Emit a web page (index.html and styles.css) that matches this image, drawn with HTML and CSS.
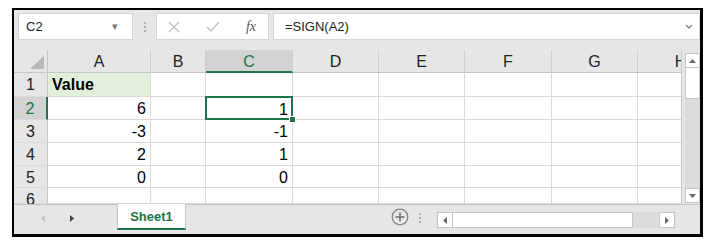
FILE: index.html
```html
<!DOCTYPE html>
<html lang="en">
  <head>
    <meta charset="UTF-8" />
    <title>SIGN function</title>
    <link rel="stylesheet" href="styles.css">
  </head>
  <body>
    <div class="window">
      <div class="formula-bar">
        <div class="name-box">
          <span>C2</span>
          <span class="caret">&#9662;</span>
        </div>
        <div class="grip"><i></i><i></i><i></i></div>
        <div class="fx-buttons">
          <svg width="12" height="12" viewBox="0 0 12 12"><path d="M1 1 L11 11 M11 1 L1 11" stroke="#bdbdbd" stroke-width="1.2" fill="none"/></svg>
          <svg width="14" height="12" viewBox="0 0 14 12"><path d="M1 6 L5 10 L13 1" stroke="#bdbdbd" stroke-width="1.2" fill="none"/></svg>
          <span class="fx">fx</span>
        </div>
        <div class="formula">
          <span>=SIGN(A2)</span>
          <svg width="8" height="5" viewBox="0 0 8 5"><path d="M1 1 L4 4 L7 1" stroke="#888" stroke-width="1.4" fill="none"/></svg>
        </div>
      </div>

      <div class="sheet">
        <div class="grid">
          <div class="hd corner"><b></b></div>
          <div class="hd col">A</div>
          <div class="hd col">B</div>
          <div class="hd col sel">C</div>
          <div class="hd col">D</div>
          <div class="hd col">E</div>
          <div class="hd col">F</div>
          <div class="hd col">G</div>
          <div class="hd col">H</div>

          <div class="hd row">1</div>
          <div class="cell label">Value</div>
          <div class="cell"></div><div class="cell"></div><div class="cell"></div><div class="cell"></div><div class="cell"></div><div class="cell"></div><div class="cell"></div>

          <div class="hd row sel">2</div>
          <div class="cell num">6</div>
          <div class="cell"></div>
          <div class="cell num active">1<i class="handle"></i></div>
          <div class="cell"></div><div class="cell"></div><div class="cell"></div><div class="cell"></div><div class="cell"></div>

          <div class="hd row">3</div>
          <div class="cell num">-3</div>
          <div class="cell"></div>
          <div class="cell num">-1</div>
          <div class="cell"></div><div class="cell"></div><div class="cell"></div><div class="cell"></div><div class="cell"></div>

          <div class="hd row">4</div>
          <div class="cell num">2</div>
          <div class="cell"></div>
          <div class="cell num">1</div>
          <div class="cell"></div><div class="cell"></div><div class="cell"></div><div class="cell"></div><div class="cell"></div>

          <div class="hd row">5</div>
          <div class="cell num">0</div>
          <div class="cell"></div>
          <div class="cell num">0</div>
          <div class="cell"></div><div class="cell"></div><div class="cell"></div><div class="cell"></div><div class="cell"></div>

          <div class="hd row">6</div>
          <div class="cell"></div><div class="cell"></div><div class="cell"></div><div class="cell"></div><div class="cell"></div><div class="cell"></div><div class="cell"></div><div class="cell"></div>
        </div>

        <div class="vscroll">
          <div class="sbtn"><svg width="7" height="4" viewBox="0 0 7 4"><path d="M0 4 L3.5 0 L7 4 Z" fill="#666"/></svg></div>
          <div class="vthumb"></div>
          <div class="vtrack"></div>
          <div class="sbtn"><svg width="7" height="4" viewBox="0 0 7 4"><path d="M0 0 L3.5 4 L7 0 Z" fill="#666"/></svg></div>
        </div>
      </div>

      <div class="tabbar">
        <div class="nav">
          <svg width="4" height="7" viewBox="0 0 4 7"><path d="M4 0 L0 3.5 L4 7 Z" fill="#c4c4c4"/></svg>
          <svg width="4" height="7" viewBox="0 0 4 7"><path d="M0 0 L4 3.5 L0 7 Z" fill="#444"/></svg>
        </div>
        <div class="tab">Sheet1</div>
        <div class="add">
          <svg width="18" height="18" viewBox="0 0 18 18"><circle cx="9" cy="9" r="7.8" stroke="#808080" stroke-width="1.3" fill="none"/><path d="M9 4.5 V13.5 M4.5 9 H13.5" stroke="#707070" stroke-width="1.6"/></svg>
        </div>
        <div class="grip"><i></i><i></i><i></i></div>
        <div class="hscroll">
          <div class="sbtn"><svg width="4" height="7" viewBox="0 0 4 7"><path d="M4 0 L0 3.5 L4 7 Z" fill="#666"/></svg></div>
          <div class="hthumb"></div>
          <div class="htrack"></div>
          <div class="sbtn"><svg width="4" height="7" viewBox="0 0 4 7"><path d="M0 0 L4 3.5 L0 7 Z" fill="#666"/></svg></div>
        </div>
      </div>
    </div>
  </body>
</html>
```

FILE: styles.css
```css
* {
  margin: 0;
  padding: 0;
  box-sizing: border-box;
}

body {
  background: #fff;
  font-family: "Liberation Sans", Arial, sans-serif;
  color: #000;
}

.window {
  margin: 8px 0 0 12px;
  width: 691px;
  height: 229px;
  border: 2px solid #000;
  border-right-width: 3px;
  border-bottom-width: 3px;
  background: #e6e6e6;
  display: flex;
  flex-direction: column;
  overflow: hidden;
}

/* formula bar */
.formula-bar {
  height: 40px;
  display: flex;
  align-items: flex-start;
  padding: 3px 0 0 4px;
}

.name-box {
  width: 115px;
  height: 27px;
  background: #fff;
  border: 1px solid #d6d6d6;
  display: flex;
  align-items: center;
  justify-content: space-between;
  padding: 0 14px 0 7px;
  font-size: 13px;
  color: #222;
}

.caret {
  font-size: 11px;
  color: #777;
}

.grip {
  width: 23px;
  height: 27px;
  display: flex;
  flex-direction: column;
  align-items: center;
  justify-content: center;
  gap: 2px;
}

.grip i {
  width: 2px;
  height: 2px;
  background: #b0b0b0;
}

.fx-buttons {
  width: 113px;
  height: 27px;
  background: #fff;
  border: 1px solid #d6d6d6;
  display: flex;
  align-items: center;
  justify-content: space-between;
  padding: 0 12px 0 11px;
}

.fx {
  font-family: "Liberation Serif", serif;
  font-style: italic;
  font-size: 14px;
  color: #555;
}

.formula {
  flex: 1;
  height: 27px;
  margin-left: 4px;
  background: #fff;
  border: 1px solid #d6d6d6;
  display: flex;
  align-items: center;
  justify-content: space-between;
  padding: 0 6px 0 11px;
  font-size: 13px;
  color: #222;
}

/* sheet */
.sheet {
  height: 154px;
  display: flex;
}

.grid {
  width: 668px;
  overflow: hidden;
  display: grid;
  grid-template-columns: 34px 103px 55px 87px 86px 86px 87px 86px 86px;
  grid-template-rows: 23px 24px 23px 23px 23px 22px 16px;
  background: #fff;
  border-right: 1px solid #c6c6c6;
}

.hd {
  background: #e6e6e6;
  font-size: 16px;
  color: #222;
  display: flex;
  align-items: center;
  justify-content: center;
}

.col {
  border-bottom: 1px solid #c6c6c6;
  border-right: 1px solid #d0d0d0;
  padding-top: 2px;
}

.col.sel {
  background: #d2d2d2;
  border-bottom: 2px solid #217346;
  color: #217346;
  padding-top: 3px;
}

.corner {
  border-right: 1px solid #c6c6c6;
  border-bottom: 1px solid #c6c6c6;
  position: relative;
}

.corner b {
  position: absolute;
  right: 3px;
  bottom: 3px;
  width: 0;
  height: 0;
  border-left: 14px solid transparent;
  border-bottom: 13px solid #b7b7b7;
}

.row {
  border-right: 1px solid #c6c6c6;
  border-bottom: 1px solid #dadada;
  align-items: flex-start;
  padding-top: 3px;
}

.row.sel {
  background: #d2d2d2;
  border-right: 2px solid #217346;
  color: #217346;
}

.cell {
  border-right: 1px solid #dadada;
  border-bottom: 1px solid #dadada;
  font-size: 16px;
  padding: 3px 4px 0;
  position: relative;
}

.label {
  background: #e2efda;
  font-weight: bold;
}

.num {
  text-align: right;
}

.active {
  border: 2px solid #217346;
  margin: -1px 0 0 -1px;
  padding: 3px 3px 0;
  z-index: 2;
}

.handle {
  position: absolute;
  right: -5px;
  bottom: -5px;
  width: 7px;
  height: 7px;
  background: #217346;
  border: 1px solid #fff;
}

.vscroll {
  flex: 1;
  display: flex;
  flex-direction: column;
  padding: 3px 0 1px 3px;
}

.sbtn {
  background: #fff;
  border: 1px solid #c6c6c6;
  display: flex;
  align-items: center;
  justify-content: center;
}

.vscroll .sbtn {
  height: 15px;
}

.vthumb {
  height: 31px;
  background: #fff;
  border: 1px solid #c6c6c6;
  border-top: none;
}

.vtrack {
  flex: 1;
  background: #dcdcdc;
}

/* sheet tabs */
.tabbar {
  flex: 1;
  border-top: 1px solid #c6c6c6;
  display: flex;
  align-items: flex-start;
}

.nav {
  width: 103px;
  height: 26px;
  display: flex;
  align-items: center;
  gap: 25px;
  padding-left: 27px;
}

.tab {
  margin-top: -1px;
  width: 69px;
  height: 26px;
  background: #fff;
  border: 1px solid #c6c6c6;
  border-top: none;
  border-bottom: 2px solid #217346;
  font-size: 13px;
  font-weight: bold;
  color: #217346;
  display: flex;
  align-items: center;
  justify-content: center;
}

.add {
  margin-left: 205px;
  margin-top: 3px;
  width: 18px;
  height: 18px;
}

.tabbar .grip {
  width: 22px;
  height: 14px;
  margin-top: 6px;
}

.hscroll {
  margin-top: 7px;
  width: 238px;
  height: 16px;
  display: flex;
  margin-left: 6px;
}

.hscroll .sbtn {
  width: 16px;
}

.hthumb {
  width: 180px;
  background: #fff;
  border: 1px solid #c6c6c6;
  border-left: none;
}

.htrack {
  flex: 1;
  background: #dcdcdc;
}
```
